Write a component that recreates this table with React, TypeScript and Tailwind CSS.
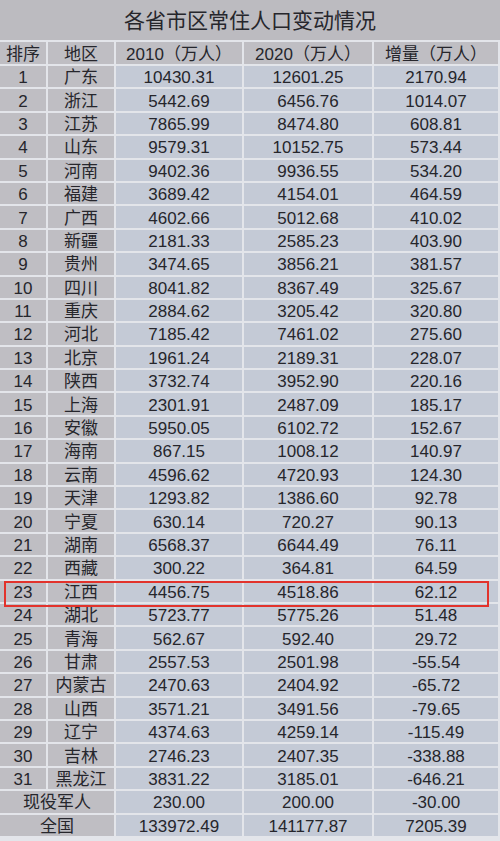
const ROWS: [string, string, string, string, string][] = [
  ["1", "广东", "10430.31", "12601.25", "2170.94"],
  ["2", "浙江", "5442.69", "6456.76", "1014.07"],
  ["3", "江苏", "7865.99", "8474.80", "608.81"],
  ["4", "山东", "9579.31", "10152.75", "573.44"],
  ["5", "河南", "9402.36", "9936.55", "534.20"],
  ["6", "福建", "3689.42", "4154.01", "464.59"],
  ["7", "广西", "4602.66", "5012.68", "410.02"],
  ["8", "新疆", "2181.33", "2585.23", "403.90"],
  ["9", "贵州", "3474.65", "3856.21", "381.57"],
  ["10", "四川", "8041.82", "8367.49", "325.67"],
  ["11", "重庆", "2884.62", "3205.42", "320.80"],
  ["12", "河北", "7185.42", "7461.02", "275.60"],
  ["13", "北京", "1961.24", "2189.31", "228.07"],
  ["14", "陕西", "3732.74", "3952.90", "220.16"],
  ["15", "上海", "2301.91", "2487.09", "185.17"],
  ["16", "安徽", "5950.05", "6102.72", "152.67"],
  ["17", "海南", "867.15", "1008.12", "140.97"],
  ["18", "云南", "4596.62", "4720.93", "124.30"],
  ["19", "天津", "1293.82", "1386.60", "92.78"],
  ["20", "宁夏", "630.14", "720.27", "90.13"],
  ["21", "湖南", "6568.37", "6644.49", "76.11"],
  ["22", "西藏", "300.22", "364.81", "64.59"],
  ["23", "江西", "4456.75", "4518.86", "62.12"],
  ["24", "湖北", "5723.77", "5775.26", "51.48"],
  ["25", "青海", "562.67", "592.40", "29.72"],
  ["26", "甘肃", "2557.53", "2501.98", "-55.54"],
  ["27", "内蒙古", "2470.63", "2404.92", "-65.72"],
  ["28", "山西", "3571.21", "3491.56", "-79.65"],
  ["29", "辽宁", "4374.63", "4259.14", "-115.49"],
  ["30", "吉林", "2746.23", "2407.35", "-338.88"],
  ["31", "黑龙江", "3831.22", "3185.01", "-646.21"],
]

const TOTALS: [string, string, string, string][] = [
  ["现役军人", "230.00", "200.00", "-30.00"],
  ["全国", "133972.49", "141177.87", "7205.39"],
]

const font = { fontFamily: '"Liberation Sans", "Noto Sans CJK SC", sans-serif' }

const grid = "grid grid-cols-[48px_68px_128px_130px_126px]"
const cell = "flex items-center justify-center pt-[2px] border-r-2 border-b-2 border-[#e3e5ea] text-[17px] leading-none text-[#26262c]"
const gray = "bg-[#bfbec3]"
const blue = "bg-[#c4cad6]"

export default function App() {
  return (
    <div className="w-[500px] h-[841px] overflow-hidden bg-[#e3e5ea]" style={font}>
      <div className="h-[42px] flex items-center justify-center pt-[2px] bg-[#bcbbc0] border-b-2 border-[#e3e5ea] text-[21px] text-[#26262c]">
        各省市区常住人口变动情况
      </div>
      <div className={grid + " h-[24px]"}>
        <div className={cell + " " + gray}>排序</div>
        <div className={cell + " " + gray}>地区</div>
        <div className={cell + " " + gray}>2010（万人）</div>
        <div className={cell + " " + gray}>2020（万人）</div>
        <div className={cell + " " + gray + " border-r-0"}>增量（万人）</div>
      </div>
      <div className="relative">
        {ROWS.map((r) => (
          <div key={r[0]} className={grid + " h-[23.4px]"}>
            <div className={cell + " " + gray}>{r[0]}</div>
            <div className={cell + " " + gray}>{r[1]}</div>
            <div className={cell + " " + blue}>{r[2]}</div>
            <div className={cell + " " + blue}>{r[3]}</div>
            <div className={cell + " " + blue + " border-r-0"}>{r[4]}</div>
          </div>
        ))}
        {TOTALS.map((r) => (
          <div key={r[0]} className={grid + " h-[23.4px]"}>
            <div className={cell + " " + gray + " col-span-2"}>{r[0]}</div>
            <div className={cell + " " + blue}>{r[1]}</div>
            <div className={cell + " " + blue}>{r[2]}</div>
            <div className={cell + " " + blue + " border-r-0"}>{r[3]}</div>
          </div>
        ))}
        <div className="absolute left-[4px] top-[515px] w-[485px] h-[26px] border-2 border-[#e2332c] pointer-events-none" />
      </div>
    </div>
  )
}
